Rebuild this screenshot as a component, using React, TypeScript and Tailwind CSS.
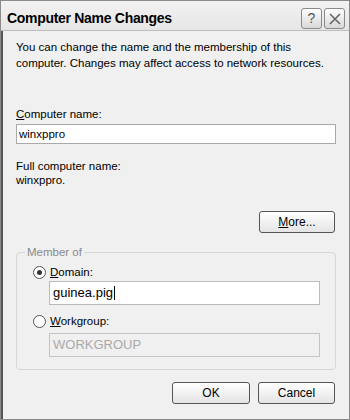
import React from 'react';

const font = { fontFamily: '"Liberation Sans", Arial, sans-serif' };

function Radio({ checked }: { checked?: boolean }) {
  return (
    <span className="flex h-[13px] w-[13px] items-center justify-center rounded-full border border-[#555] bg-white">
      {checked && <span className="h-[5px] w-[5px] rounded-full bg-[#333]" />}
    </span>
  );
}

function Button({ children, className = '' }: { children: React.ReactNode; className?: string }) {
  return (
    <button
      className={`flex h-[22px] items-center justify-center rounded-[3px] border border-[#555] bg-gradient-to-b from-white to-[#e4e4e4] text-[12px] text-black ${className}`}
    >
      {children}
    </button>
  );
}

export default function App() {
  return (
    <div className="h-[420px] w-[350px] bg-white" style={font}>
      <div className="flex h-[420px] w-[350px] flex-col border border-[#8a8a8a] bg-[#f0f0f0]">
        {/* Title bar */}
        <div className="flex h-[30px] items-center justify-between border-b border-[#bdbdbd] bg-gradient-to-b from-[#f2f2f2] to-[#e6e6e6] pl-[6px] pr-[4px] pt-[6px]">
          <span className="text-[14px] font-bold tracking-[-0.3px] text-black">Computer Name Changes</span>
          <div className="flex gap-[2px]">
            <span className="flex h-[21px] w-[21px] items-center justify-center rounded-[3px] border border-[#8a8a8a] bg-gradient-to-b from-white to-[#d8d8d8] text-[14px] text-[#555]">
              ?
            </span>
            <span className="flex h-[21px] w-[21px] items-center justify-center rounded-[3px] border border-[#8a8a8a] bg-gradient-to-b from-white to-[#d8d8d8]">
              <svg width="14" height="14" viewBox="0 0 14 14" fill="none" stroke="#666" strokeWidth="1.6">
                <path d="M2 2 L12 12 M12 2 L2 12" />
              </svg>
            </span>
          </div>
        </div>

        {/* Client area */}
        <div className="flex flex-1 flex-col border-l-2 border-l-[#555] px-[13px] pt-[8px] text-[11.5px] leading-[16px] text-black">
          <p className="whitespace-nowrap">
            You can change the name and the membership of this
            <br />
            computer. Changes may affect access to network resources.
          </p>

          <div className="mt-[35px]">
            <u>C</u>omputer name:
          </div>
          <div className="mt-[2px] flex h-[20px] items-center border border-[#aaa] bg-white px-[2px]">winxppro</div>

          <div className="mt-[15px] leading-[14px]">
            <div>Full computer name:</div>
            <div>winxppro.</div>
          </div>

          <div className="mt-[24px] flex justify-end pr-[1px]">
            <Button className="w-[76px]">
              <u>M</u>ore...
            </Button>
          </div>

          <fieldset className="mt-[11px] rounded-[4px] border border-[#d6d6d6] pb-[12px] pl-[32px] pr-[15px]">
            <legend className="-ml-[24px] px-[2px] text-[#8a8a8a]">Member of</legend>
            <label className="-ml-[16px] mt-[4px] flex items-center gap-[4px]">
              <Radio checked />
              <span>
                <u>D</u>omain:
              </span>
            </label>
            <div className="mt-[1px] flex h-[24px] items-center border border-[#bbb] bg-white px-[3px] text-[13px]">
              guinea.pig<span className="ml-[1px] h-[14px] w-[1px] bg-black" />
            </div>
            <label className="-ml-[16px] mt-[8px] flex items-center gap-[4px]">
              <Radio />
              <span>
                <u>W</u>orkgroup:
              </span>
            </label>
            <div className="mt-[4px] flex h-[24px] items-center border border-[#c4c4c4] bg-[#f0f0f0] px-[3px] text-[13px] text-[#aaa]">
              WORKGROUP
            </div>
          </fieldset>

          <div className="mt-[12px] flex justify-end gap-[8px] pr-[1px]">
            <Button className="w-[78px]">OK</Button>
            <Button className="w-[77px]">Cancel</Button>
          </div>
        </div>
      </div>
    </div>
  );
}
